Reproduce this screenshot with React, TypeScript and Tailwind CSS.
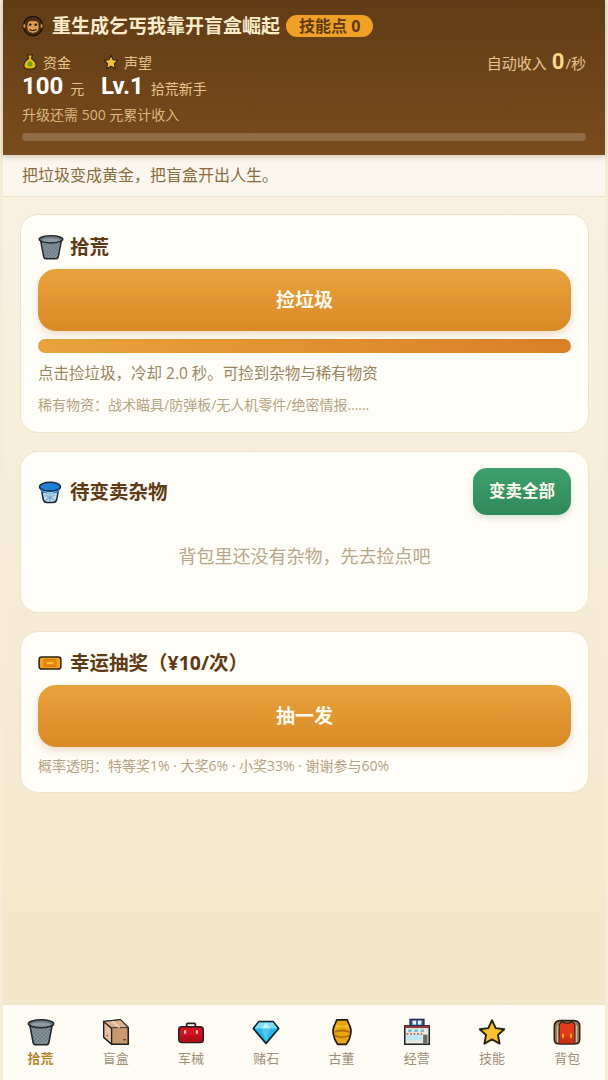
import type { ReactNode } from "react";

const Trash = ({ size = 26, id }: { size?: number; id: string }) => (
  <svg width={size} height={size} viewBox="0 0 32 32">
    <defs>
      <pattern id={id} width="3" height="3" patternUnits="userSpaceOnUse" patternTransform="rotate(45)">
        <rect width="3" height="3" fill="#8b979e" />
        <path d="M0 0h3M0 0v3" stroke="#56626a" strokeWidth="0.9" />
      </pattern>
    </defs>
    <path d="M3 7 L7 28 Q7.5 30.5 10 30.5 H22 Q24.5 30.5 25 28 L29 7Z" fill={`url(#${id})`} stroke="#23282b" strokeWidth="1.8" />
    <ellipse cx="16" cy="6.5" rx="14.5" ry="4.5" fill="#6d797f" stroke="#23282b" strokeWidth="1.8" />
    <ellipse cx="16" cy="7.5" rx="11" ry="2.4" fill="#8e9aa1" />
  </svg>
);

const Box = () => (
  <svg width="28" height="28" viewBox="0 0 32 32">
    <path d="M2 4 L21 2 L30 11 V30 H11 L2 22Z" fill="#c99a70" stroke="#22201e" strokeWidth="1.8" strokeLinejoin="round" />
    <path d="M2 4 L11 12 V30 L2 22Z" fill="#e6c0a4" stroke="#22201e" strokeWidth="1.5" strokeLinejoin="round" />
    <path d="M2 4 L21 2 L30 11 H11Z" fill="#dcb38e" stroke="#22201e" strokeWidth="1" strokeLinejoin="round" />
    <path d="M12 4 L20 11" stroke="#eed6bd" strokeWidth="2" />
    <rect x="24" y="24" width="3.5" height="1.5" fill="#5d4430" />
    <circle cx="6" cy="20" r="1" fill="#d13a44" />
  </svg>
);

const Toolbox = () => (
  <svg width="28" height="28" viewBox="0 0 32 32">
    <path d="M11 11 V7.5 Q11 6 12.5 6 H19.5 Q21 6 21 7.5 V11" fill="none" stroke="#23201f" strokeWidth="2" />
    <rect x="2" y="10" width="28" height="18" rx="3.5" fill="#d9121f" stroke="#23201f" strokeWidth="1.8" />
    <path d="M3 20 H29 V25 Q29 27 27 27 H5 Q3 27 3 25Z" fill="#b30d18" />
    <rect x="8" y="14" width="2.5" height="4" fill="#f4c7c7" />
    <rect x="21.5" y="14" width="2.5" height="4" fill="#f4c7c7" />
  </svg>
);

const Gem = () => (
  <svg width="28" height="28" viewBox="0 0 32 32">
    <path d="M8 4 H24 L30.5 12 L16 29 L1.5 12Z" fill="#29b6e8" stroke="#16222b" strokeWidth="2" strokeLinejoin="round" />
    <path d="M8 5 H24 L29 12 H3Z" fill="#7edcf6" />
    <path d="M11 12 L16 5 L21 12Z" fill="#c5f1fc" />
    <path d="M11 12 H21 L16 27Z" fill="#4fc6ef" />
  </svg>
);

const Amphora = () => (
  <svg width="28" height="28" viewBox="0 0 32 32">
    <path d="M10 2 H22 Q23 5 24 7 Q27 12 26 18 Q25 25 21 30 H11 Q7 25 6 18 Q5 12 8 7 Q9 5 10 2Z" fill="#e9a50f" stroke="#1f1a12" strokeWidth="2" strokeLinejoin="round" />
    <path d="M9 7 Q16 11 23 7 L24 12 Q16 8 8 12Z" fill="#f2c037" />
    <path d="M7.5 15 Q16 11 24.5 15 L24 17 Q16 14 8 17Z" fill="#a86d08" />
    <path d="M8 20 Q16 24 24 20" stroke="#a86d08" strokeWidth="1.6" fill="none" />
  </svg>
);

const Shop = () => (
  <svg width="28" height="28" viewBox="0 0 32 32">
    <rect x="8" y="1.5" width="16" height="8" fill="#2b5fa8" stroke="#1f2430" strokeWidth="1.4" />
    <rect x="11" y="3" width="4" height="4.6" fill="#e9f1fa" />
    <rect x="17" y="3" width="4" height="4.6" fill="#e9f1fa" />
    <rect x="2" y="9" width="28" height="21" fill="#f2ead9" stroke="#1f2430" strokeWidth="1.8" />
    <rect x="2" y="9" width="28" height="2.5" fill="#8c3a3e" />
    <rect x="6" y="13" width="4" height="3" fill="#5cc4ea" />
    <rect x="13" y="13" width="4" height="3" fill="#5cc4ea" />
    <rect x="20" y="13" width="4" height="3" fill="#5cc4ea" />
    <path d="M4 18 H22 V26 H4Z" fill="#bfe7f5" />
    <path d="M4 18 H22" stroke="#d9574b" strokeWidth="2" strokeDasharray="2 2" />
    <rect x="23" y="19" width="5" height="10" fill="#6b6a63" />
  </svg>
);

const Star = ({ size = 28 }: { size?: number }) => (
  <svg width={size} height={size} viewBox="0 0 32 32">
    <path d="M16 2.5 L20.2 11.6 L30 12.8 L22.8 19.5 L24.7 29.3 L16 24.4 L7.3 29.3 L9.2 19.5 L2 12.8 L11.8 11.6Z" fill="#fbc02d" stroke="#2a2415" strokeWidth="2.2" strokeLinejoin="round" />
  </svg>
);

const Backpack = () => (
  <svg width="28" height="28" viewBox="0 0 32 32">
    <path d="M8 3 Q1.5 3 1.5 10 V24 Q1.5 29.5 6 29.5 H26 Q30.5 29.5 30.5 24 V10 Q30.5 3 24 3Z" fill="#a27b5c" stroke="#2a211a" strokeWidth="1.8" />
    <path d="M7 7 H8 V28 H6 Q4.5 28 4.5 26 V10 Q4.5 7 7 7Z" fill="#d8b998" />
    <path d="M25 7 H24 V28 H26 Q27.5 28 27.5 26 V10 Q27.5 7 25 7Z" fill="#d8b998" />
    <path d="M10 4 Q16 8 22 4 L25 8 V28 Q25 29.5 23.5 29.5 H8.5 Q7 29.5 7 28 V8Z" fill="#e3391d" stroke="#2a211a" strokeWidth="1.4" />
    <rect x="7.5" y="21" width="17" height="8" fill="#cc2f17" />
    <rect x="10.5" y="18" width="2" height="5" fill="#f5b32a" />
    <rect x="19.5" y="18" width="2" height="5" fill="#f5b32a" />
  </svg>
);

const Monkey = () => (
  <svg width="22" height="22" viewBox="0 0 32 32">
    <circle cx="16" cy="16" r="14" fill="#4d2f14" stroke="#1d1208" strokeWidth="1.8" />
    <ellipse cx="3.5" cy="16" rx="2.5" ry="3.5" fill="#c98a4a" stroke="#1d1208" strokeWidth="1.2" />
    <ellipse cx="28.5" cy="16" rx="2.5" ry="3.5" fill="#c98a4a" stroke="#1d1208" strokeWidth="1.2" />
    <path d="M8 15 Q8 8 16 9 Q24 8 24 15 Q26 25 16 26 Q6 25 8 15Z" fill="#dd9a55" />
    <circle cx="12" cy="14" r="1.8" fill="#1d1208" />
    <circle cx="20" cy="14" r="1.8" fill="#1d1208" />
    <path d="M11 21 Q16 24 21 21" stroke="#1d1208" strokeWidth="1.6" fill="none" />
  </svg>
);

const MoneyBag = () => (
  <svg width="16" height="16" viewBox="0 0 32 32">
    <path d="M11 2 H21 L19 9 Q30 16 28 25 Q27 30 20 30 H12 Q5 30 4 25 Q2 16 13 9Z" fill="#e8b90f" stroke="#30270a" strokeWidth="2.4" strokeLinejoin="round" />
    <circle cx="16" cy="20" r="5" fill="#6da32d" />
  </svg>
);

const Basket = () => (
  <svg width="24" height="24" viewBox="0 0 32 32">
    <path d="M4 9 L7 26 Q8 30 12 30 H20 Q24 30 25 26 L28 9Z" fill="#b9d9ef" stroke="#172633" strokeWidth="2" />
    <ellipse cx="16" cy="9" rx="14" ry="6" fill="#1d7fd6" stroke="#172633" strokeWidth="2" />
    <path d="M3 11 Q16 24 29 11 L28 16 Q16 20 4 16Z" fill="#1d7fd6" />
    <path d="M10 20 L22 27 M22 20 L10 27 M16 19 V29" stroke="#6b93b3" strokeWidth="1.2" />
  </svg>
);

const Ticket = () => (
  <svg width="24" height="24" viewBox="0 0 32 32">
    <rect x="1.5" y="8" width="29" height="16" rx="3.5" fill="#f5a11c" stroke="#2a1f10" strokeWidth="2" />
    <rect x="8" y="11.5" width="16" height="9" fill="#e98a10" stroke="#c9760a" strokeWidth="1" />
    <path d="M12 16 H20" stroke="#f9d24a" strokeWidth="2" />
  </svg>
);

const Card = ({ children, className }: { children: ReactNode; className: string }) => (
  <section className={`rounded-[18px] border border-[#efe3c6] bg-[#fffdf7] px-[17px] ${className}`}>
    {children}
  </section>
);

const BigButton = ({ children }: { children: ReactNode }) => (
  <button className="h-[62px] w-full rounded-[18px] bg-gradient-to-b from-[#e8a33d] to-[#d98a26] text-[19px] font-bold text-[#fffaf0] shadow-[0_4px_8px_rgba(160,100,30,0.2)]">
    {children}
  </button>
);

const tabs = [
  { label: "拾荒", icon: <Trash size={28} id="mesh-tab" />, active: true },
  { label: "盲盒", icon: <Box /> },
  { label: "军械", icon: <Toolbox /> },
  { label: "赌石", icon: <Gem /> },
  { label: "古董", icon: <Amphora /> },
  { label: "经营", icon: <Shop /> },
  { label: "技能", icon: <Star /> },
  { label: "背包", icon: <Backpack /> },
];

export default function App() {
  return (
    <div className="flex h-[1080px] flex-col overflow-hidden bg-[#f5ecd8] px-[3px] [font-family:'Open_Sans','Noto_Sans_CJK_SC',sans-serif]">
      <header className="relative h-[155px] shrink-0 bg-gradient-to-b from-[#613c16] to-[#784c1c] px-[19px] pt-[14px] shadow-[0_2px_6px_rgba(90,60,20,0.25)]">
        <div className="flex h-[24px] items-center">
          <Monkey />
          <h1 className="ml-[8px] text-[19px] font-bold leading-[24px] text-[#fdeccb]">重生成乞丐我靠开盲盒崛起</h1>
          <span className="ml-[6px] flex h-[22px] items-center rounded-full bg-[#f0a024] px-[13px] text-[16px] font-bold text-[#5f3b15]">技能点 0</span>
        </div>
        <div className="mt-[15px] flex justify-between">
          <div className="flex">
            <div className="w-[79px]">
              <div className="flex h-[18px] items-center gap-[5px] text-[14px] text-[#e6c48f]"><MoneyBag />资金</div>
              <div className="flex h-[30px] items-baseline gap-[7px] text-[#e6c48f]"><b className="[font-family:Roboto,sans-serif] text-[24px] leading-[30px] text-white">100</b><span className="text-[14px] leading-[30px]">元</span></div>
            </div>
            <div>
              <div className="flex h-[18px] items-center gap-[5px] pl-[2px] text-[14px] text-[#e6c48f]"><Star size={16} />声望</div>
              <div className="flex h-[30px] items-baseline gap-[7px] text-[#e6c48f]"><b className="[font-family:Roboto,sans-serif] text-[24px] leading-[30px] text-white">Lv.1</b><span className="text-[14px] leading-[30px]">拾荒新手</span></div>
            </div>
          </div>
          <div className="flex h-[18px] items-baseline text-[15px] leading-[18px] text-[#e6c48f]">
            自动收入<b className="ml-[5px] mr-[1px] [font-family:Roboto,sans-serif] text-[22px] leading-[18px] text-[#fbd98f]">0</b>/秒
          </div>
        </div>
        <p className="mt-[5px] text-[14px] leading-[18px] text-[#dcb77f]">升级还需 500 元累计收入</p>
        <div className="mt-[9px] h-[8px] rounded-full bg-[#8f6c45]" />
      </header>

      <p className="h-[42px] shrink-0 border-b border-[#f0e3c8] bg-[#fbf7ef] pl-[19px] text-[16px] leading-[41px] text-[#8b6b3d]">把垃圾变成黄金，把盲盒开出人生。</p>

      <main className="flex flex-1 flex-col gap-[18px] bg-gradient-to-b from-[#f8f1e2] to-[#f3e6c9] pl-[17px] pr-[16px] pt-[17px]">
        <Card className="h-[219px] pt-[17px]">
          <div className="flex h-[29px] items-center gap-[6px]">
            <Trash id="mesh-head" />
            <h2 className="text-[19.5px] font-bold text-[#5f3b15]">拾荒</h2>
          </div>
          <div className="mt-[8px]"><BigButton>捡垃圾</BigButton></div>
          <div className="mt-[8px] h-[14px] rounded-full bg-gradient-to-r from-[#e8a33d] to-[#d98026]" />
          <p className="mt-[9px] text-[15.5px] leading-[22px] text-[#9a8460]">点击捡垃圾，冷却 2.0 秒。可捡到杂物与稀有物资</p>
          <p className="mt-[12px] text-[14px] leading-[18px] text-[#b5a382]">稀有物资：战术瞄具/防弹板/无人机零件/绝密情报……</p>
        </Card>

        <Card className="h-[162px] pt-[16px]">
          <div className="flex h-[47px] items-center justify-between">
            <div className="flex items-center gap-[8px]">
              <Basket />
              <h2 className="text-[19.5px] font-bold text-[#5f3b15]">待变卖杂物</h2>
            </div>
            <button className="h-[47px] w-[98px] rounded-[14px] bg-gradient-to-b from-[#3fa06c] to-[#2f8a5a] text-[16.5px] font-bold text-[#fffaf0] shadow-[0_3px_6px_rgba(60,110,70,0.2)]">变卖全部</button>
          </div>
          <p className="mt-[28px] text-center text-[18px] leading-[26px] text-[#b8a78a]">背包里还没有杂物，先去捡点吧</p>
        </Card>

        <Card className="h-[162px] pt-[16px]">
          <div className="flex h-[30px] items-center gap-[8px]">
            <Ticket />
            <h2 className="text-[19.5px] font-bold text-[#5f3b15]">幸运抽奖（¥10/次）</h2>
          </div>
          <div className="mt-[7px]"><BigButton>抽一发</BigButton></div>
          <p className="mt-[10px] text-[14px] leading-[18px] text-[#b5a382]">概率透明：特等奖1% · 大奖6% · 小奖33% · 谢谢参与60%</p>
        </Card>
      </main>

      <nav className="grid h-[76px] shrink-0 grid-cols-8 border-t border-[#efe3c8] bg-[#fffcf5] pt-[13px]">
        {tabs.map((t) => (
          <div key={t.label} className="flex flex-col items-center">
            <div className="flex h-[28px] items-center">{t.icon}</div>
            <span className={`mt-[3px] text-[13px] leading-[18px] ${t.active ? "font-bold text-[#b8862f]" : "text-[#9e8f78]"}`}>{t.label}</span>
          </div>
        ))}
      </nav>
    </div>
  );
}
